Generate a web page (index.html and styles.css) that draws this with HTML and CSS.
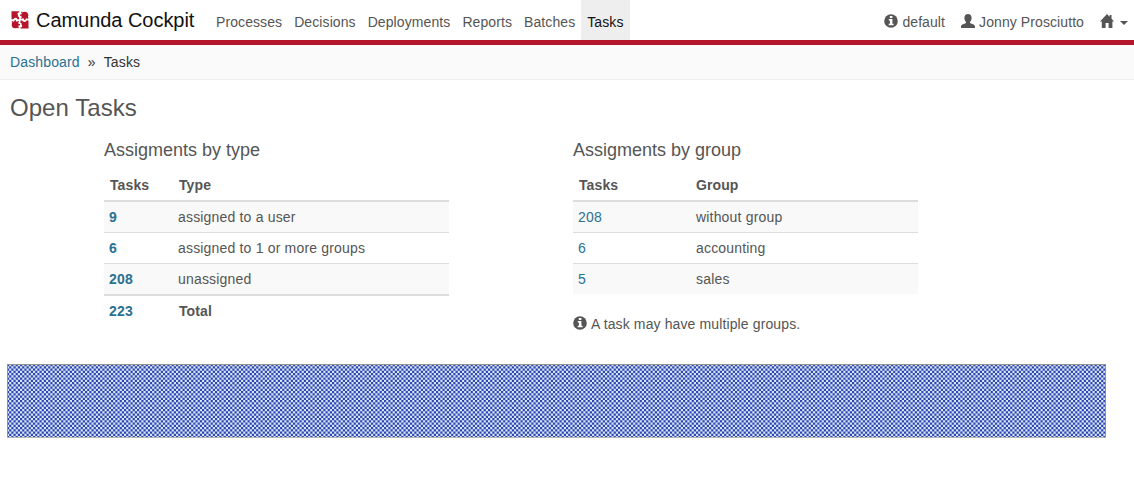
FILE: index.html
```html
<!DOCTYPE html>
<html lang="en">
<head>
<meta charset="utf-8">
<title>Camunda Cockpit</title>
<link rel="stylesheet" href="styles.css">
</head>
<body>
<svg class="defs" width="0" height="0">
  <symbol id="info" viewBox="0 0 14 14"><circle cx="7" cy="7" r="6.8"/><path fill="#fff" d="M5.800 2h2.600v2H5.800zM4.800 5h3.600v4.800h1.200v1.500H4.700V9.800h1.200V6.500H4.800z"/></symbol>
</svg>
<header class="navbar">
  <a class="brand">
    <svg class="logo" viewBox="0 0 18 18"><path fill="#b5152b" d="M.5.200h7.700v1.400H7L6.300 3l.8.9-.4 1.300 1 .6.500 1.100v1.300H6.400l-.6-1.100-1.500-.4-1.200.5-.8 1H.5z"/><circle cx="13.800" cy="4.200" r="3.500" fill="#b5152b"/><path stroke="#b5152b" stroke-width="1.300" d="M9 4.200h2M10.400 7.600l1.500-1.500M13.800 7v2M10.400.9l1 1M17.200 7.500l-1.200-1.200"/><circle cx="4.200" cy="13.700" r="3.500" fill="#b5152b"/><path stroke="#b5152b" stroke-width="1.300" d="M4.200 9v2M7.600 10.300 6 11.900M7 13.700h2M1 10.500l1.200 1.200M7.500 17 6 15.500"/><path fill="#b5152b" d="M9.500 17.600v-1.400h1.200l.7-1.300-.9-1.100.3-1.200-1.300-.6V9.500h1.700l.7 1.100 1.700.4 1.300-.5.800-1h1.800v8.100z"/></svg>
    <span class="brand-name">Camunda Cockpit</span>
  </a>
  <nav class="sections">
    <a>Processes</a><a>Decisions</a><a>Deployments</a><a>Reports</a><a>Batches</a><a class="active">Tasks</a>
  </nav>
  <div class="account">
    <a class="engine"><svg class="icon"><use href="#info"/></svg>default</a>
    <a class="user"><svg class="icon" viewBox="0 0 14 14"><path d="M7 0c2.200 0 3.600 1.400 3.600 3.700 0 1.800-.6 3.400-1.600 4.400v1c1.800.9 5 1.500 5 3.400V14H0v-1.500c0-1.900 3.200-2.500 5-3.400v-1C4 7.100 3.400 5.500 3.400 3.700 3.400 1.400 4.800 0 7 0z"/></svg>Jonny Prosciutto</a>
    <a class="home"><svg class="icon" viewBox="0 0 14 14"><path d="M7 0l2.700 2.800V1h1.800v3.600L14 7.400h-1.600V14H8.600V9H5.600v5H1.800V7.400H0z"/></svg><span class="caret"></span></a>
  </div>
</header>
<div class="breadcrumbs"><a>Dashboard</a><span class="sep">»</span><span>Tasks</span></div>
<main>
  <h1>Open Tasks</h1>
  <div class="columns">
    <section>
      <h2>Assigments by type</h2>
      <table class="by-type">
        <thead><tr><th>Tasks</th><th>Type</th></tr></thead>
        <tbody>
          <tr><td><a>9</a></td><td>assigned to a user</td></tr>
          <tr><td><a>6</a></td><td>assigned to 1 or more groups</td></tr>
          <tr><td><a>208</a></td><td>unassigned</td></tr>
        </tbody>
        <tfoot><tr><td><a>223</a></td><th>Total</th></tr></tfoot>
      </table>
    </section>
    <section>
      <h2>Assigments by group</h2>
      <table class="by-group">
        <thead><tr><th>Tasks</th><th>Group</th></tr></thead>
        <tbody>
          <tr><td><a>208</a></td><td>without group</td></tr>
          <tr><td><a>6</a></td><td>accounting</td></tr>
          <tr><td><a>5</a></td><td>sales</td></tr>
        </tbody>
      </table>
      <p class="note"><svg class="icon"><use href="#info"/></svg>A task may have multiple groups.</p>
    </section>
  </div>
  <svg class="band" width="1099" height="74">
    <defs>
      <pattern id="check" width="13" height="9" patternUnits="userSpaceOnUse">
        <path fill="#d3e8f6" d="M0 0h13v9H0z"/>
        <path stroke="#3142b2" stroke-width="2.250" stroke-dasharray="2.1667 2.1667" d="M0 1.125h13M0 5.625h13"/>
        <path stroke="#3142b2" stroke-width="2.250" stroke-dasharray="2.1667 2.1667" stroke-dashoffset="2.1667" d="M0 3.375h13M0 7.875h13"/>
      </pattern>
    </defs>
    <rect width="1099" height="74" fill="url(#check)"/>
    <path d="M0 .5h1099M.5 0v74M1098.500 0v74" fill="none" stroke="#929292"/>
    <path d="M0 73.500h1099" stroke="#b5b5b8"/>
  </svg>
</main>
</body>
</html>
```
FILE: styles.css
```css
* { box-sizing: border-box; }
body { margin: 0; background: #fff; color: #555; font: 14px/20px "Liberation Sans", Arial, sans-serif; letter-spacing: .09px; }
.defs { display: block; }
.icon { width: 14px; height: 14px; fill: #555; flex: none; }
.navbar { display: flex; height: 45px; border-bottom: 5px solid #b5152b; }
.brand { display: flex; align-items: center; width: 210px; padding-left: 11px; color: #111; font-size: 20px; letter-spacing: -.04px; }
.logo { width: 18px; height: 18px; margin-right: 7px; }
.sections { display: flex; }
.sections a { padding: 12px 6px 8px; }
.sections .active { background: #eee; color: #111; }
.account { display: flex; margin-left: auto; padding: 12px 6px 0 0; }
.account a { display: flex; }
.account .icon { margin: 2px 4px 0 0; }
.engine { margin-right: 16px; }
.user { margin-right: 16px; }
.caret { width: 0; height: 0; margin: 9px 0 0 2px; border: 4px solid transparent; border-top-color: #555; border-bottom: 0; }
.breadcrumbs { display: flex; height: 35px; padding: 7px 10px; background: #fafafa; border-bottom: 1px solid #eee; color: #333; letter-spacing: .14px; }
.breadcrumbs a, td a { color: #2a7192; }
.sep { margin: 0 8px; }
h1, h2 { margin: 0; font-weight: 400; letter-spacing: 0; }
h1 { padding: 14px 10px 0; font-size: 24px; line-height: 28px; letter-spacing: .05px; }
.columns { display: flex; gap: 124px; height: 242px; padding: 16px 0 0 104px; }
section { width: 345px; }
h2 { font-size: 18px; line-height: 24px; }
table { width: 100%; margin-top: 8px; border-collapse: separate; border-spacing: 0; table-layout: fixed; letter-spacing: .18px; }
th, td { height: 31px; padding: 5px; text-align: left; line-height: 20px; }
th { letter-spacing: .1px; padding-left: 6px; }
th:first-child { width: 69px; }
.by-group th:first-child { width: 118px; }
.by-group th + th { padding-left: 5px; }
thead th { height: 32px; border-bottom: 2px solid #ddd; }
tbody tr:nth-child(odd) { background: #f9f9f9; }
tbody tr:first-child td { height: 30px; }
tbody tr + tr td { border-top: 1px solid #ddd; }
tfoot th, tfoot td { border-top: 2px solid #ddd; }
.by-type td a { font-weight: 700; }
.note { display: flex; margin: 20px 0 0; letter-spacing: .12px; }
.note .icon { margin: 2px 4px 0 0; }
.band { display: block; margin-left: 7px; }
```
